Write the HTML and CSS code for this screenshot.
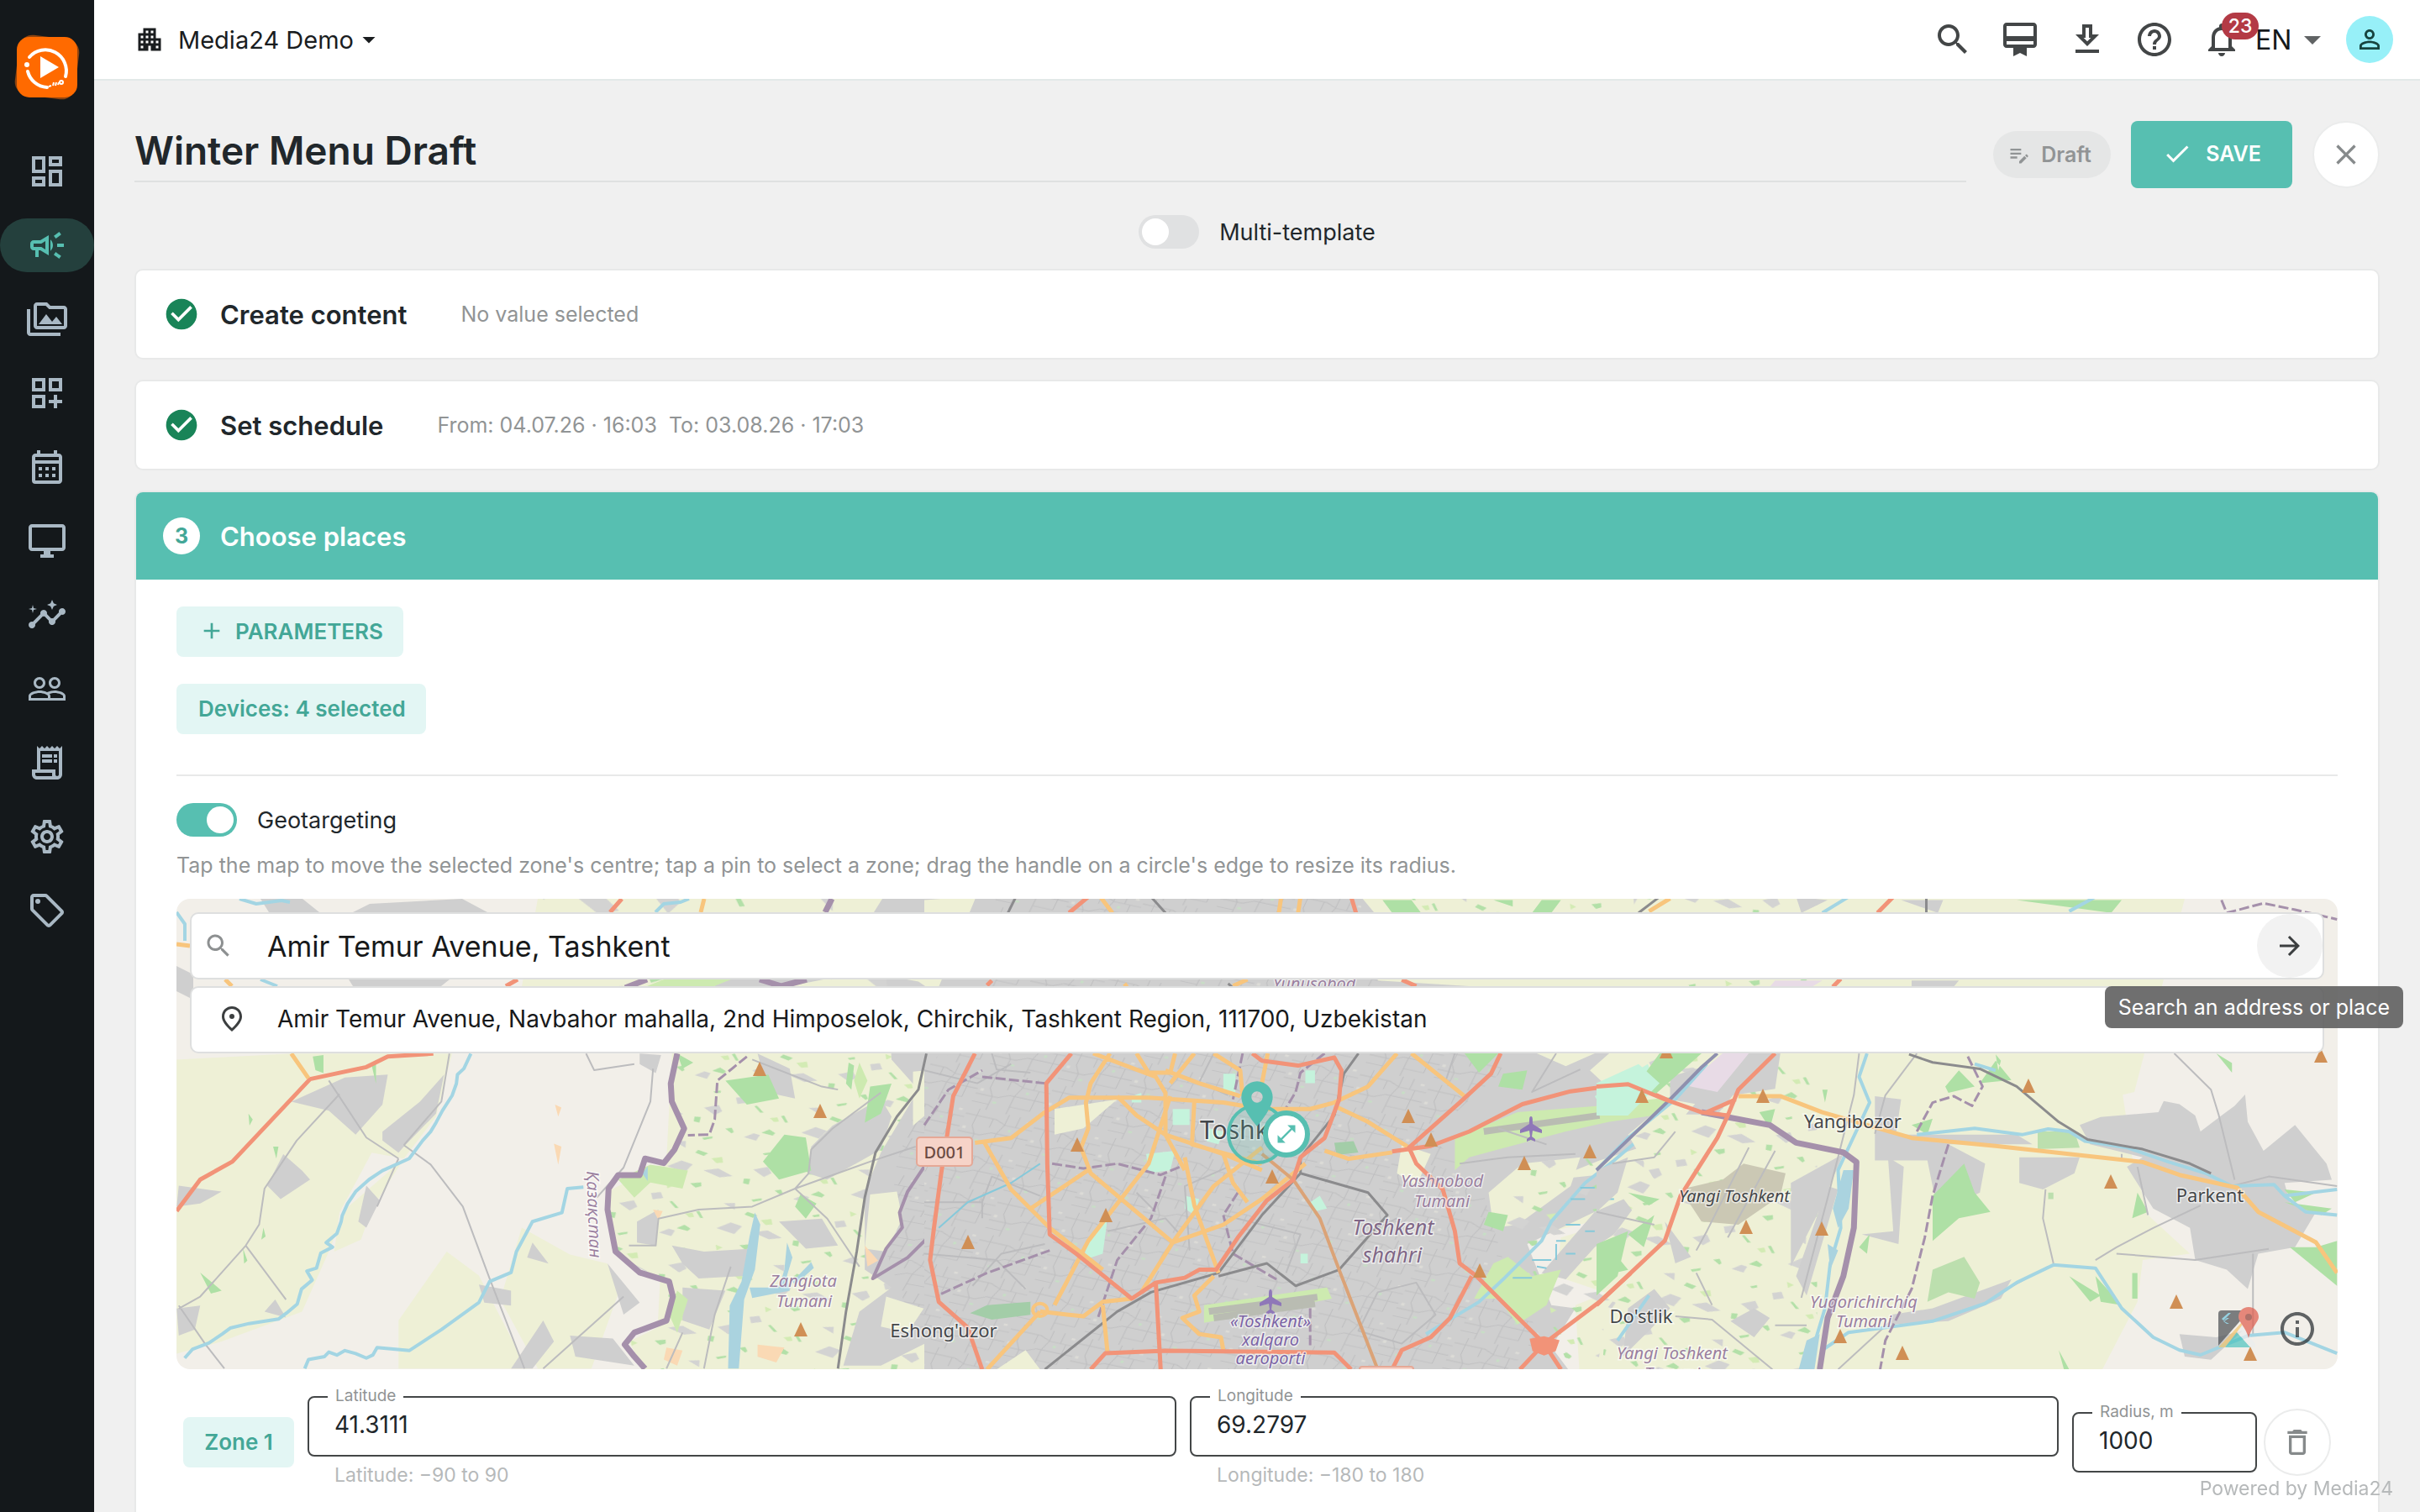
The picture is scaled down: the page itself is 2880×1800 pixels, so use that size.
FILE: index.html
```html
<!DOCTYPE html>
<html lang="en">
<head>
<meta charset="utf-8">
<title>Winter Menu Draft – Media24</title>
<meta name="viewport" content="width=device-width, initial-scale=1">
<link rel="stylesheet" href="styles.css">
</head>
<body>
<svg class="sprite" aria-hidden="true">
  <symbol id="i-dashboard" viewBox="0 0 24 24"><path d="M19 5v2h-4V5h4M9 5v6H5V5h4m10 8v6h-4v-6h4M9 17v2H5v-2h4M21 3h-8v6h8V3zM11 3H3v10h8V3zm10 8h-8v10h8V11zm-10 4H3v6h8v-6z"/></symbol>
  <symbol id="i-campaign" viewBox="0 0 24 24"><path d="M18 11v2h4v-2h-4zm-2 6.61c.96.71 2.21 1.65 3.2 2.39.4-.53.8-1.07 1.2-1.6-.99-.74-2.24-1.68-3.2-2.4-.4.54-.8 1.08-1.2 1.61zM20.4 5.6c-.4-.53-.8-1.07-1.2-1.6-.99.74-2.24 1.68-3.2 2.4.4.53.8 1.07 1.2 1.6.96-.72 2.21-1.65 3.2-2.4zM4 9c-1.1 0-2 .9-2 2v2c0 1.1.9 2 2 2h1v4h2v-4h1l5 3V6L8 9H4zm5.03 1.71L11 9.53v4.94l-1.97-1.18-.48-.29H4v-2h4.55l.48-.29zM15.5 12c0-1.33-.58-2.53-1.5-3.35v6.69c.92-.81 1.5-2.01 1.5-3.34z"/></symbol>
  <symbol id="i-media" viewBox="0 0 24 24"><path d="M2 6H0v5h.01L0 20c0 1.100.9 2 2 2h18v-2H2V6zm5 9h14l-3.500-4.500-2.500 3.010L11.500 9zM22 4h-8l-2-2H6c-1.100 0-1.990.9-1.990 2L4 16c0 1.100.9 2 2 2h16c1.100 0 2-.9 2-2V6c0-1.100-.9-2-2-2zm0 12H6V4h5.170l1.410 1.410.59.59H22v10z"/></symbol>
  <symbol id="i-widgets" viewBox="0 0 24 24"><path d="M3 11h8V3H3v8zm2-6h4v4H5V5zm8-2v8h8V3h-8zm6 6h-4V5h4v4zM3 21h8v-8H3v8zm2-6h4v4H5v-4zm13-2h-2v3h-3v2h3v3h2v-3h3v-2h-3z"/></symbol>
  <symbol id="i-calendar" viewBox="0 0 24 24"><path d="M19 4h-1V2h-2v2H8V2H6v2H5c-1.110 0-1.990.9-1.990 2L3 20a2 2 0 0 0 2 2h14c1.100 0 2-.9 2-2V6c0-1.100-.9-2-2-2zm0 16H5V10h14v10zm0-12H5V6h14v2zM9 14H7v-2h2v2zm4 0h-2v-2h2v2zm4 0h-2v-2h2v2zm-8 4H7v-2h2v2zm4 0h-2v-2h2v2zm4 0h-2v-2h2v2z"/></symbol>
  <symbol id="i-screen" viewBox="0 0 24 24"><path d="M21 2H3c-1.100 0-2 .9-2 2v12c0 1.100.9 2 2 2h7v2H8v2h8v-2h-2v-2h7c1.100 0 2-.9 2-2V4c0-1.100-.9-2-2-2zm0 14H3V4h18v12z"/></symbol>
  <symbol id="i-insights" viewBox="0 0 24 24"><path d="M21 8c-1.450 0-2.260 1.440-1.930 2.510l-3.550 3.560c-.3-.09-.74-.09-1.040 0l-2.550-2.550C12.270 10.450 11.460 9 10 9c-1.450 0-2.270 1.440-1.930 2.520l-4.560 4.550C2.440 15.740 1 16.550 1 18c0 1.100.9 2 2 2 1.450 0 2.260-1.440 1.930-2.510l4.550-4.560c.3.09.74.09 1.040 0l2.550 2.550C12.730 16.550 13.540 18 15 18c1.450 0 2.270-1.440 1.930-2.520l3.560-3.550C21.560 12.260 23 11.450 23 10c0-1.100-.9-2-2-2zM15 9l.94-2.070L18 6l-2.060-.93L15 3l-.92 2.070L12 6l2.080.93zM3.500 11L4 9l2-.5L4 8l-.5-2L3 8l-2 .5L3 9z"/></symbol>
  <symbol id="i-people" viewBox="0 0 24 24"><path d="M16.500 13c-1.200 0-3.070.34-4.500 1-1.430-.67-3.300-1-4.500-1C5.330 13 1 14.080 1 16.250V19h22v-2.750c0-2.170-4.330-3.250-6.500-3.250zm-4 4.500h-10v-1.250c0-.54 2.560-1.750 5-1.750s5 1.210 5 1.750v1.250zm9 0H14v-1.250c0-.46-.2-.86-.52-1.220.88-.3 1.960-.53 3.020-.53 2.440 0 5 1.210 5 1.750v1.250zM7.500 12c1.930 0 3.500-1.570 3.500-3.500S9.430 5 7.500 5 4 6.570 4 8.500 5.570 12 7.500 12zm0-5.500c1.100 0 2 .9 2 2s-.9 2-2 2-2-.9-2-2 .9-2 2-2zm9 5.500c1.930 0 3.500-1.570 3.500-3.500S18.430 5 16.500 5 13 6.570 13 8.500s1.570 3.500 3.500 3.500zm0-5.500c1.100 0 2 .9 2 2s-.9 2-2 2-2-.9-2-2 .9-2 2-2z"/></symbol>
  <symbol id="i-receipt" viewBox="0 0 24 24"><path d="M19.500 3.500L18 2l-1.500 1.500L15 2l-1.500 1.500L12 2l-1.500 1.500L9 2 7.500 3.500 6 2v14H3v3c0 1.660 1.340 3 3 3h12c1.660 0 3-1.340 3-3V2l-1.500 1.500zM15 20H6c-.55 0-1-.45-1-1v-1h10v2zm4-1c0 .55-.45 1-1 1s-1-.45-1-1v-3H8V5h11v14z"/><path d="M9 7h6v2H9zM16 7h2v2h-2zM9 10h6v2H9zM16 10h2v2h-2z"/></symbol>
  <symbol id="i-settings" viewBox="0 0 24 24"><path d="M19.430 12.980c.04-.32.07-.64.07-.98 0-.34-.03-.66-.07-.98l2.110-1.650c.19-.15.24-.42.12-.64l-2-3.460c-.09-.16-.26-.25-.44-.25-.06 0-.12.01-.17.03l-2.490 1c-.52-.4-1.080-.73-1.690-.98l-.38-2.650C14.460 2.180 14.250 2 14 2h-4c-.25 0-.46.18-.49.42l-.38 2.650c-.61.25-1.170.59-1.690.98l-2.490-1c-.06-.02-.12-.03-.18-.03-.17 0-.34.09-.43.25l-2 3.460c-.13.22-.07.49.12.64l2.110 1.650c-.04.32-.07.65-.07.98 0 .33.03.66.07.98l-2.110 1.650c-.19.15-.24.42-.12.64l2 3.460c.09.16.26.25.44.25.06 0 .12-.01.17-.03l2.490-1c.52.4 1.080.73 1.690.98l.38 2.650c.03.24.24.42.49.42h4c.25 0 .46-.18.49-.42l.38-2.650c.61-.25 1.170-.59 1.690-.98l2.490 1c.06.02.12.03.18.03.17 0 .34-.09.43-.25l2-3.460c.12-.22.07-.49-.12-.64l-2.110-1.650zm-1.980-1.710c.04.31.05.52.05.73 0 .21-.02.43-.05.73l-.14 1.130.89.7 1.080.84-.7 1.210-1.270-.51-1.040-.42-.9.68c-.43.32-.84.56-1.250.73l-1.060.43-.16 1.130-.2 1.350h-1.400l-.19-1.350-.16-1.130-1.060-.43c-.43-.18-.83-.41-1.230-.71l-.91-.7-1.060.43-1.270.51-.7-1.210 1.080-.84.89-.7-.14-1.130c-.03-.31-.05-.54-.05-.74s.02-.43.05-.73l.14-1.130-.89-.7-1.080-.84.7-1.210 1.270.51 1.040.42.9-.68c.43-.32.84-.56 1.250-.73l1.060-.43.16-1.130.2-1.350h1.390l.19 1.350.16 1.130 1.060.43c.43.18.83.41 1.230.71l.91.7 1.060-.43 1.270-.51.7 1.210-1.070.85-.89.7.14 1.130zM12 8c-2.210 0-4 1.790-4 4s1.790 4 4 4 4-1.790 4-4-1.790-4-4-4zm0 6c-1.100 0-2-.9-2-2s.9-2 2-2 2 .9 2 2-.9 2-2 2z"/></symbol>
  <symbol id="i-tag" viewBox="0 0 24 24"><path d="M21.410 11.580l-9-9C12.050 2.220 11.550 2 11 2H4c-1.100 0-2 .9-2 2v7c0 .55.22 1.050.59 1.420l9 9c.36.36.86.58 1.410.58s1.050-.22 1.410-.59l7-7c.37-.36.59-.86.59-1.410s-.23-1.060-.59-1.420zM13 20.010L4 11V4h7v-.01l9 9-7 7.020z"/><circle cx="6.500" cy="6.500" r="1.500"/></symbol>
  <symbol id="i-apartment" viewBox="0 0 24 24"><path d="M17 11V3H7v4H3v14h8v-4h2v4h8V11h-4zM7 19H5v-2h2v2zm0-4H5v-2h2v2zm0-4H5V9h2v2zm4 4H9v-2h2v2zm0-4H9V9h2v2zm0-4H9V5h2v2zm4 8h-2v-2h2v2zm0-4h-2V9h2v2zm0-4h-2V5h2v2zm4 12h-2v-2h2v2zm0-4h-2v-2h2v2z"/></symbol>
  <symbol id="i-drop" viewBox="0 0 24 24"><path d="M7 10l5 5 5-5z"/></symbol>
  <symbol id="i-search" viewBox="0 0 24 24"><path d="M15.500 14h-.79l-.28-.27C15.410 12.590 16 11.110 16 9.500 16 5.910 13.090 3 9.500 3S3 5.910 3 9.500 5.910 16 9.500 16c1.610 0 3.090-.59 4.230-1.570l.27.28v.79l5 4.990L20.490 19l-4.990-5zm-6 0C7.010 14 5 11.990 5 9.500S7.010 5 9.500 5 14 7.010 14 9.500 11.990 14 9.500 14z"/></symbol>
  <symbol id="i-board" viewBox="0 0 24 24"><path d="M20 2H4c-1.110 0-2 .89-2 2v11c0 1.110.89 2 2 2h4v5l4-2 4 2v-5h4c1.110 0 2-.89 2-2V4c0-1.110-.89-2-2-2zm0 13H4v-2h16v2zm0-5H4V4h16v6z"/></symbol>
  <symbol id="i-download" viewBox="0 0 24 24"><path d="M19 9h-4V3H9v6H5l7 7 7-7zm-8 2V5h2v6h1.170L12 13.170 9.830 11H11zm-6 7h14v2H5z"/></symbol>
  <symbol id="i-help" viewBox="0 0 24 24"><path d="M11 18h2v-2h-2v2zm1-16C6.480 2 2 6.480 2 12s4.480 10 10 10 10-4.480 10-10S17.520 2 12 2zm0 18c-4.410 0-8-3.590-8-8s3.590-8 8-8 8 3.590 8 8-3.590 8-8 8zm0-14c-2.210 0-4 1.790-4 4h2c0-1.100.9-2 2-2s2 .9 2 2c0 2-3 1.750-3 5h2c0-2.250 3-2.500 3-5 0-2.210-1.790-4-4-4z"/></symbol>
  <symbol id="i-bell" viewBox="0 0 24 24"><path d="M12 22c1.100 0 2-.9 2-2h-4c0 1.100.9 2 2 2zm6-6v-5c0-3.070-1.630-5.640-4.500-6.320V4c0-.83-.67-1.500-1.500-1.500s-1.500.67-1.500 1.500v.68C7.640 5.360 6 7.920 6 11v5l-2 2v1h16v-1l-2-2zm-2 1H8v-6c0-2.480 1.510-4.500 4-4.500s4 2.020 4 4.500v6z"/></symbol>
  <symbol id="i-person" viewBox="0 0 24 24"><path d="M12 5.900c1.160 0 2.100.94 2.100 2.100s-.94 2.100-2.100 2.100S9.900 9.160 9.900 8s.94-2.100 2.100-2.100m0 9c2.970 0 6.100 1.460 6.100 2.100v1.100H5.900V17c0-.64 3.130-2.100 6.100-2.100M12 4C9.790 4 8 5.790 8 8s1.790 4 4 4 4-1.790 4-4-1.790-4-4-4zm0 9c-2.670 0-8 1.340-8 4v3h16v-3c0-2.660-5.330-4-8-4z"/></symbol>
  <symbol id="i-note" viewBox="0 0 24 24"><path d="M3 10h11v2H3v-2zm0-2h11V6H3v2zm0 8h7v-2H3v2zm15.010-3.130.71-.71c.39-.39 1.020-.39 1.410 0l.71.71c.39.39.39 1.020 0 1.410l-.71.71-2.120-2.120zm-.71.71-5.300 5.300V21h2.120l5.300-5.300-2.120-2.120z"/></symbol>
  <symbol id="i-check" viewBox="0 0 24 24"><path d="M9 16.170L4.830 12l-1.420 1.410L9 19 21 7l-1.410-1.410z"/></symbol>
  <symbol id="i-close" viewBox="0 0 24 24"><path d="M19 6.410L17.590 5 12 10.590 6.410 5 5 6.410 10.590 12 5 17.590 6.410 19 12 13.410 17.590 19 19 17.590 13.410 12z"/></symbol>
  <symbol id="i-done" viewBox="0 0 24 24"><path d="M12 2C6.480 2 2 6.480 2 12s4.480 10 10 10 10-4.480 10-10S17.520 2 12 2zm-2 15l-5-5 1.410-1.410L10 14.170l7.590-7.590L19 8l-9 9z"/></symbol>
  <symbol id="i-add" viewBox="0 0 24 24"><path d="M19 13h-6v6h-2v-6H5v-2h6V5h2v6h6v2z"/></symbol>
  <symbol id="i-arrow" viewBox="0 0 24 24"><path d="M12 4l-1.410 1.410L16.170 11H4v2h12.170l-5.580 5.590L12 20l8-8z"/></symbol>
  <symbol id="i-pin" viewBox="0 0 24 24"><path d="M12 2c-4.200 0-8 3.220-8 8.200 0 3.320 2.670 7.250 8 11.800 5.330-4.550 8-8.480 8-11.800C20 5.220 16.200 2 12 2zm0 17.340c-4.050-3.700-6-6.790-6-9.140C6 6.430 8.820 4 12 4s6 2.430 6 6.200c0 2.340-1.950 5.440-6 9.140z"/><circle cx="12" cy="10" r="2"/></symbol>
  <symbol id="i-place" viewBox="0 0 24 24"><path d="M12 2C8.130 2 5 5.130 5 9c0 5.250 7 13 7 13s7-7.750 7-13c0-3.870-3.130-7-7-7zm0 9.500c-1.380 0-2.500-1.120-2.500-2.500s1.120-2.500 2.500-2.500 2.500 1.120 2.500 2.500-1.120 2.500-2.500 2.500z"/></symbol>
  <symbol id="i-resize" viewBox="0 0 24 24"><path d="M21 11V3h-8l3.290 3.290-10 10L3 13v8h8l-3.290-3.290 10-10z"/></symbol>
  <symbol id="i-info" viewBox="0 0 24 24"><path d="M11 7h2v2h-2zm0 4h2v6h-2zm1-9C6.480 2 2 6.480 2 12s4.480 10 10 10 10-4.480 10-10S17.520 2 12 2zm0 18c-4.410 0-8-3.590-8-8s3.590-8 8-8 8 3.590 8 8-3.590 8-8 8z"/></symbol>
  <symbol id="i-trash" viewBox="0 0 24 24"><path d="M6 19c0 1.100.9 2 2 2h8c1.100 0 2-.9 2-2V7H6v12zM8 9h8v10H8V9zm7.500-5l-1-1h-5l-1 1H5v2h14V4z"/></symbol>
</svg>

<div class="app">
  <aside class="sidebar">
    <a class="logo" href="#" aria-label="Media24 home">
      <svg viewBox="0 0 80 80" aria-hidden="true">
        <rect x="4" y="4" width="72" height="72" rx="16" fill="#8f440f" transform="rotate(7 40 40)"/>
        <rect x="4" y="4" width="72" height="72" rx="15" fill="#ff6a00"/>
        <g fill="none" stroke="#fff" stroke-width="4" stroke-linecap="round">
          <path d="M19 28A25 25 0 0 1 62 51"/>
          <path d="M17 45A25 25 0 0 0 40 64"/>
        </g>
        <circle cx="16" cy="37" r="3" fill="#fff"/>
        <path d="M32 27v26l22-13z" fill="#fff"/>
        <path d="M42 63l3-1m2 0l1-4m2 4l1-4m2 3l1-3" stroke="#fff" stroke-width="2" fill="none"/>
        <circle cx="57" cy="58" r="2" stroke="#fff" stroke-width="2" fill="none"/>
      </svg>
    </a>
    <nav class="nav" aria-label="Main">
      <a href="#" aria-label="Dashboard"><svg class="ic48"><use href="#i-dashboard"/></svg></a>
      <a href="#" class="active" aria-label="Campaigns" aria-current="page"><svg class="ic48"><use href="#i-campaign"/></svg></a>
      <a href="#" aria-label="Media"><svg class="ic48"><use href="#i-media"/></svg></a>
      <a href="#" aria-label="Widgets"><svg class="ic48"><use href="#i-widgets"/></svg></a>
      <a href="#" aria-label="Calendar"><svg class="ic48"><use href="#i-calendar"/></svg></a>
      <a href="#" aria-label="Devices"><svg class="ic48"><use href="#i-screen"/></svg></a>
      <a href="#" aria-label="Insights"><svg class="ic48"><use href="#i-insights"/></svg></a>
      <a href="#" aria-label="Users"><svg class="ic48"><use href="#i-people"/></svg></a>
      <a href="#" aria-label="Billing"><svg class="ic48"><use href="#i-receipt"/></svg></a>
      <a href="#" aria-label="Settings"><svg class="ic48"><use href="#i-settings"/></svg></a>
      <a href="#" aria-label="Tags"><svg class="ic48"><use href="#i-tag"/></svg></a>
    </nav>
  </aside>

  <div class="page">
    <header class="topbar">
      <button class="company" type="button" aria-haspopup="menu">
        <svg class="ic36"><use href="#i-apartment"/></svg>
        <span>Media24 Demo</span>
        <svg class="ic36 caret"><use href="#i-drop"/></svg>
      </button>
      <div class="tools">
        <button type="button" aria-label="Search"><svg class="ic48"><use href="#i-search"/></svg></button>
        <button type="button" aria-label="Plans"><svg class="ic48"><use href="#i-board"/></svg></button>
        <button type="button" aria-label="Downloads"><svg class="ic48"><use href="#i-download"/></svg></button>
        <button type="button" aria-label="Help"><svg class="ic48"><use href="#i-help"/></svg></button>
        <button type="button" class="bell" aria-label="Notifications"><svg class="ic48"><use href="#i-bell"/></svg><span class="badge">23</span></button>
      </div>
      <div class="lang">
        <select aria-label="Language"><option>EN</option></select>
        <svg class="ic48"><use href="#i-drop"/></svg>
      </div>
      <button class="avatar" type="button" aria-label="Account"><svg class="ic36"><use href="#i-person"/></svg></button>
    </header>

    <main class="content">
      <div class="title-row">
        <input class="title" type="text" aria-label="Campaign name" value="Winter Menu Draft">
        <span class="status"><svg class="ic28"><use href="#i-note"/></svg>Draft</span>
        <button class="save" type="button"><svg class="ic36"><use href="#i-check"/></svg>SAVE</button>
        <button class="round close" type="button" aria-label="Close"><svg class="ic40"><use href="#i-close"/></svg></button>
      </div>

      <label class="switch centered"><input type="checkbox"><span>Multi-template</span></label>

      <div class="steps">
        <section class="card">
          <div class="step-head">
            <svg class="ic44 done"><use href="#i-done"/></svg>
            <h2>Create content</h2>
            <p>No value selected</p>
          </div>
        </section>
        <section class="card">
          <div class="step-head">
            <svg class="ic44 done"><use href="#i-done"/></svg>
            <h2>Set schedule</h2>
            <p>From: 04.07.26 · 16:03&nbsp; To: 03.08.26 · 17:03</p>
          </div>
        </section>
        <section class="card">
          <div class="step-head current">
            <span class="number">3</span>
            <h2>Choose places</h2>
          </div>
          <div class="step-body">
            <button class="soft params" type="button"><svg class="ic32"><use href="#i-add"/></svg>PARAMETERS</button>
            <button class="soft devices" type="button">Devices: 4 selected</button>
            <hr>
            <label class="switch"><input type="checkbox" checked><span>Geotargeting</span></label>
            <p class="hint">Tap the map to move the selected zone's centre; tap a pin to select a zone; drag the handle on a circle's edge to resize its radius.</p>

            <div class="map">
              <svg class="tiles" viewBox="210 1070 2572 560" preserveAspectRatio="xMidYMid slice" role="img" aria-label="Map of Tashkent">
                <defs>
                  <pattern id="streets" width="148" height="122" patternUnits="userSpaceOnUse" patternTransform="rotate(18)">
                    <path d="M0 22H66L90 34H148M0 78H48L70 64H148M24 0V54L36 78V122M88 0V34L80 64V122M124 34V98H80M0 104H36M112 0V34M60 22V50" fill="none" stroke="#b4b4b6" stroke-width="2"/>
                    <path d="M42 92h8v6h-8zM100 44h6v8h-6z" fill="#c2e8bf"/><path d="M6 60h7v8h-7zM130 10h8v6h-8z" fill="#e6e5dd"/>
                  </pattern>
                  <pattern id="fields" width="274" height="226" patternUnits="userSpaceOnUse" patternTransform="rotate(-24)">
                    <path d="M10 10l12 2-2 14-6 3zM66 50l18-4 5 16-8 5zM40 114l14 2-3 7-10-2zM122 14l6 1-3 24-5-2zM200 60l9-6 12 18-11 5zM150 150l20 5-5 12-12 0zM240 190l8-14 10 6-10 16zM90 190l5 0 2 26-6-2zM232 20l20 4-4 6-16-2z" fill="#b3e0a8"/>
                    <path d="M30 50l22-4 8 10-14 14zM134 80l32-6 14 20-24 18zM2 156l29 3-3 22-18 6zM190 120l28 6 14 34-24-6zM180 10l20 8-10 20zM70 150l18 4-4 20-20-4z" fill="#d3d3d2"/>
                    <path d="M100 12l14 3-3 14-9-2zM220 90l20 4-6 18-12-4zM110 130l8 14-14 4z" fill="#d3ebb4"/>
                  </pattern>
                  <path id="peak" d="M0-9L8 8H-8z" fill="#d08f55"/>
                  <path id="plane" d="M0-14c2 0 2 3 2 9l11 7v4L2 3l-1 7 4 3v3l-5-2-5 2v-3l4-3-1-7-11 3V2l11-7c0-6 0-9 2-9z" fill="#8f78b8"/>
                </defs>
                <rect x="210" y="1070" width="2572" height="560" fill="#f2efe9"/>

                <g class="land">
                  <path class="farm" d="M640 1070H2600L2540 1300 1160 1630H780L800 1250 620 1180z"/>
                  <path class="fields" d="M640 1070H1200V1260H800L720 1150z"/>
                  <path class="town" d="M310 1070l50 0 20 16-60 0zM440 1076l110-6 30 16H420zM1050 1070h90l-20 16h-80zM415 1166h120l-10 8H420zM210 1150l20 10v30l-20-10zM860 1166h120l-40 8h-90z"/>
                  <path class="river" d="M285 1070l20 6 30-4 10 2M210 1086l10 14 0 20M780 1086l10-10 20-2 10-4M310 1166l20 8"/>
                  <path class="red" d="M740 1070l-14 16M616 1166l-14 8"/>
                  <path class="orange" d="M838 1070l-4 16M210 1124l16 2M268 1166l8 8"/>
                  <path class="border" d="M990 1070l-8 16M770 1166l-26 10M904 1166l26 8 30-8"/>
                  <path class="orchard" d="M790 1166h80l-20 8h-80z"/>
                </g>

                <g class="land" transform="translate(200 1240) scale(.6378 .3571)">
                  <path class="farm" d="M16 60L230 40H530L500 250 440 390 330 560 300 700 250 900 100 1000 16 1040zM380 560l60-170-60-20-60 200-10 130 50-40zM520 700l60 80 90 310H430V930zM660 620l90 90 70 30 20 100-50 250H690L620 860zM960 30H1460V1100H890L860 1000 940 930 930 800 840 720 820 500 930 400 965 300 940 140z"/>
                  <path class="fields" d="M960 30H1460V1100H890L860 1000 940 930 930 800 840 720 820 500 930 400 965 300 940 140z"/>
                  <path class="town" d="M230 200L330 120l80-10-10 100-50 100-50-80zM400 300l70-100 45-90-15 130-60 110-10 20-30-40zM185 480l30-105 35 55 15 30-55 65zM355 600l15-120 25 50-25 90zM580 810l60 20v50l-50-10zM875 600l40-40-5 120-35-10zM940 680l60 20 90-10v90l-100 10-30-50zM960 820l80 10-30 130-50-30zM1240 280l90-90 20 60-20 110-100 100-35-20 5-90zM200 860l20 60-40-20zM640 1090l60-160 20 70-40 90zM750 980l80 10 40 90-110-30zM820 740l60 130-30 40zM680 670l30 70-40-20zM20 480l80 20-40 40-44 10zM16 890l44-10-10 80-30 20zM1100 40l60 50 10 100-50-20zM880 40l40 5-10 60-30-30zM1140 600l80-10 30 90-60 10z"/>
                  <path class="town" d="M1340 -220L1400 -200 1600 40V1100H1520L1420 1000 1330 1080H1260L1290 900 1350 820 1300 760V500L1330 370 1400 160 1350 60z"/>
                  <path class="streets" d="M1400 200L1600 40V1100H1520L1420 1000 1380 900 1340 700 1360 400z"/>
                  <path class="farm" d="M1310 510l50-10 10 90-30 110-40-10zM1390 100l60-10-20 130-40 60zM1340 850l70 40-30 80-50-20z"/>
                  <path class="green" d="M1040 130l80-20 20 80-60 20zM1150 310l40 10 10 110-60 30-30-60zM1310 150l40-10-20 100-30 30zM1180 510l30 30-20 50-20-40zM60 770l40 60-20 10zM270 50l20-5v60l-15-10zM950 40l30 30-20 20zM1270 70l10 10-5 80-10-20zM380 80l8-20v80zM150 240l8 20-6 20zM140 690l8 40-6 10zM196 350l10 0-4 40zM178 620l4 30-8 10z"/>
                  <path d="M1500 900l70-30v60l-60 10z" fill="#a3cda8"/>
                  <path class="orchard" d="M840 460l60-50 70 20-10 60-60-20-30 50zM950 830l20 30-20 110-15-60zM1280 130l10-60 15 60-15 60z"/>
                  <path d="M1100 1010l50 10-15 50-35-20zM1300 680l25 50-20 20zM930 1020l30 10-10 50-25-20zM905 560l18 5-8 30zM720 340l14 10-6 60zM722 210l12 10-6 30z" fill="#fad9b4"/>
                  <path class="lake" d="M1095 570l10 40-10 150-20 100-10 230h-20l3-210 22-80 15-150zM1155 670l10 50-10 60 5 50-70 25-5-35 55 0 10-60zM1200 735l5 20-35 55-5-10zM885 440l10-25v50z"/>
                  <path class="road" d="M300 130l70 190 60 70M440 345l50 65 60 140 50 240 65 300M320 175l-80 155-60 160-10 120-25 70-85 170-40 40M20 880l50 130 35 80M145 680l75 180M525 40l-15 160-70 145M430 390l-40 160M905 90l-5 110-50 220-50 100M850 850L700 1090M780 40l15 55 75-20M1395 350l-85 50-140 90-80 60-100 10-75 30-5 90h-50M1170 490l60 100 60 160M1090 60l130 90 30 10M1330 170l-90 120-40 70-5 80-25 50M1050 750l-30 160-20 180M930 1090l30-120"/>
                  <path class="river" d="M565 40l-13 50-12 20-2 30-8 40-18 50-12 40-10 30-15 30-25 60-50 40-25 30-25 40-15 40-10 40-2 20-8 40-20 30 12 15-22 20-8 50-18 10 10 30-20 30-8 50-20 30-15 20-55 15-35 15-15 20-25 30-30 20-15 30M255 1090l7-30 30-10 8-15 15 10 15-15 20 10 20 15 12-10 8-25 60 10 60-70 70-90 20-70 40-30 10-70 30-100 55-30 10-80 30-5"/>
                  <path class="red" d="M16 565l44-105 60-60 145-275 105-40 40-35 85-10"/>
                  <path class="orange" d="M230 40l32 82M1568 315l-43 20-25 0M1522 340l46 140M1568 1000l-43 90"/>
                  <path class="border" d="M950 40l-12 100 2 60 23 90-18 70-20 45-35-15-10 55h-40l-18 45-2 70 15 140 45 70 55 30 7 50-12 80-60 40-18 40 18 40 20 40"/>
                  <path class="border thin" d="M1568 125l-58-5-40 10-20 90-25 60-15 140-30 80-15 70 5 50-30 70-25 100 65-70 45-80M1568 740l-60 50-60 60"/>
                  <path class="border dashed" d="M1080 50l-55 80-5 130-10 50-40 2"/>
                  <path class="rail" d="M1415 40l-15 120-40 90-40 120-20 150-15 180-20 200-15 190"/>
                  <path class="red" d="M1505 40l-25 110-30 180-10 170-15 180 5 150 60 100 30 160"/>
                </g>

                <g class="land" transform="translate(1100 1060) scale(.574 .3827)">
                  <path class="town" d="M110 10H900L950 100 940 280 1150 300 1200 507H1420L1380 560 1480 700 1568 700V760L1400 840 1300 900 1430 880 1390 1000 1250 1100 1300 1290 1350 1300 1300 1420 1340 1500H0V560L60 500 30 300z"/>
                  <path class="streets" d="M150 10H900L940 280 1150 400 1200 560 1050 760 1160 950 1200 1150 1280 1400 1200 1500H0V560L100 400z"/>
                  <path class="farm" d="M270 680l130-30-70 90-60 20zM1170 940l70-90 120-20-20 90-110 120-50 10zM1430 900l138-40v200l-128-60zM1320 1080l130-60 90 80-110 160-120-60zM1350 1290l150-90 68 30v260h-210zM990 790l60 30-30 100-40-40zM150 1490l60-60 30 60zM1270 507h120l-60 40zM1390 860l50-10-40 60zM0 30l90-10-30 50H0z"/>
                  <path class="fields" d="M1170 940l70-90 330-60v700h-230zM950 20h618v60H960z"/>
                  <path class="town" d="M1390 1000l60-40 30 60-90 90-60 100-50-20z"/>
                  <path d="M130 1290l90-10v40l-80 15-45-20zM850 785l40-5 10 35-45 8z" fill="#a3cda8"/>
                  <path class="green" d="M1200 570l50-10-10 60-50-10zM1170 1000l40 10-10 50-40-20zM1440 1090l70-20-20 100-60 20zM1500 930l50 30-10 20-40-30zM1480 1300l50-60-20 80zM1120 507h70l-40 60zM1340 430h80l-30 40zM950 30h60l20 40h-60zM1280 30h40l-20 40h-40zM1180 30h40v20z"/>
                  <path class="park" d="M515 680h35v50h-35zM460 820l60-10-10 60-45 10zM540 950l30 10-10 50-20-20zM620 570h25v60h-25zM800 970l20-20 15 40-30 10zM1390 640l110-100 20 80-110 70zM340 1080l40-60-10 110-40 20zM780 1130h15v30h-15zM590 740l30 10-10 40-25-10zM790 560h20v40h-20zM430 640l20-10v30h-20z"/>
                  <path class="orchard" d="M1100 770l130-80 170-20 160-30v50l-140 30-90 30-200 80-30 40zM580 1290l255-55 10 35-265 75zM1180 1160l30-20 50 60 60-20-30 110-60 60-40-80-50 0z"/>
                  <path d="M1160 750l240-50M590 1310l225-45M600 1330l210-45" fill="none" stroke="#b9bcb2" stroke-width="8"/>
                  <path class="road" d="M0 560l110 40 70-60M140 507l10 50 70 10M0 970h120l20-80 100 60M120 1020v-60M0 1130l150 20 60 90M550 1120l-10-200 90-60M600 507l-30 90 60 40M620 1010l160 60-30 120M940 1250l80-30 40 100-70 90-90-40zM900 1080l80-60M1100 507l-20 90M1190 740l100 50M100 1230l60-100 90-30M380 1060l120-40 30 50M440 940l40 60M1310 507l-50 120 100-70M1110 850l100-20 140-10"/>
                  <path class="river" d="M1568 665l-138 175-60 70-70 120-20 60-80 120-50 70-110 100" stroke-width="9"/>
                  <path class="river thin" d="M240 850l-60 60-90 60-60 80"/>
                  <path class="ditch" d="M1360 925l30 0M1340 960h30M1410 960h20M1330 1040h30M1370 1060h20M1310 1090h20M1260 1150h40M1220 1205h40M1330 1130h20M1270 1170l20 5M1310 1100v50"/>
                  <path class="border dashed" d="M120 580l130 20M0 730l50-110 70-60M265 850l65 15 70-15 90 35 40-25M500 890l-30 130-70 130-40 180M35 1255l95-65 130-70M660 507l-20 143M650 940l-30 70 20 120 90 80M830 507l-50 60-10 60-20 50M800 1300v120"/>
                  <path class="rail" d="M900 507l-30 63-20 130-70 130v50l-80 130-90 180-140 60-70 60-150 180M780 880l140 60 40 70-100 170-90 50-60-70-100 40M470 20l30 50M190 20l-20 60M630 290l30 40"/>
                  <path class="orange" d="M465 645H300l-50 45-70 80-75 15M125 785l55 145 80 120 110 130M340 870l-120 120M385 507l-40 93-10 60 5 80-15 60 20 80 170 215M350 507l130 73 20 50v130M400 640l40 60 60 60 120 60 80 50M500 560l70 40 85 40M465 645l155 15 80 20h100l50-20 70-50 60-103M560 507l-50 93M560 650l-5 140 145 60M510 640l-45 210-125 240-70 200M540 830l20 150 50 210M515 1095l85-175 100-120M515 1095l105-55 80-80 90-110M500 760l40 110M515 1095l-65 155M240 1310l90 15 40-45 60-10M240 1310l-110 180M370 1290l10 150M600 1200l-40 60 10 50-35 20 35 50 45 10 5 40M830 810l50 25 90-20M850 670l70 50 85 80M1010 507l110 133M700 600l12-93M600 507l55 53 5 80M620 820l20 90 30 60M440 507l25 60 45 0 10-60M365 20l25 50M740 20l-5 50M780 20l-5 50M415 290l5 10M1480 70l60-50M640 297l30-20"/>
                  <path class="orange brown" d="M700 820l65 80 55 120 40 160 80 310"/>
                  <path d="M225 1305a15 20 0 1 0 30 0 15 20 0 1 0-30 0" fill="none" stroke="#f8c57d" stroke-width="4"/>
                  <path class="red" d="M305 507l-52 93 2 250 5 220 55 60 115 140 50-50 60-15 30-25h35l45-100 60-115 55-65 15-70 50-60 30-120 5-90-15-40-75 25-75-15-20-23M345 1490l30-50 125-8 350 6 35 52M1195 507l-20 63-65 90-105 140 15 50 55 80 25 130 10 100 35 40 140 210 35 80M1285 1410l-50 80M1285 1410l115-130 130-180 38-120M970 812l80-17 80-45 110-85 100-40 110-22 50 22 68 45M1135 1200l-45 130-40 60-60 40-20 60M480 1220l10 270M105 507L60 640 35 880 20 1050l-8 100 18 130 60 80 30 130M340 20l-40 50M885 20l10 50M140 280l-10 15M990 278l30 20"/>
                  <path d="M1255 1395l30-8 32 12-8 34-24 14-24-14z" fill="#f29378"/>
                </g>

                <g class="land" transform="translate(1900 1060) scale(.625 .3827)">
                  <path class="farm" d="M70 10H640L1000 20 990 507 1020 830 1050 1010 1130 1130 1040 1150 1030 1280 960 1500H0L20 1300 70 1200 20 1100 110 900 60 760 140 650 90 507z"/>
                  <path class="fields" d="M70 10H420V1500H10L20 1300 70 1200 20 1100 110 900 60 760 140 650 90 507z"/>
                  <path class="town" d="M280 507h70l-10 110-80 20-30 60-60 0 80-150zM140 580l60-30 60 60-20 70-100-30zM530 640l50 10-10 110h230l30 30-160 0 70 60-10 90-80 60-20-160-100 0zM805 830l115 0-10 50-60 50-45-20zM555 830l30 30-10 240-70-30 60-10zM370 910l100-90-50 190-50 160zM440 920l20 10-60 330-20-60zM0 870l60-40-20 110-40 60zM130 1030l50 110-30 20zM60 1300l50-60 30 60-40 70-50 80zM255 1340l45-40 30 30-30 60zM560 1320l80-20 150-90-20 60-100 70-110 10zM580 30l80 0-10 40zM1110 1380l70 10 50-20-60 90-50-10zM380 20l60 10-50 40zM600 280h90l-10 20h-80z"/>
                  <path d="M240 507h50l-60 120-60-20zM340 280h90l-20 20h-80z" fill="#e8dbe6"/>
                  <path class="town" d="M920 730l40-25 110-15 10-35 30 10 30 35 10 50 40-50 25-30 20-35 5 85 30 90 60-80 60 120 10 50-90 10 10 60 50 30-40 110-70 20-20 110-40-60-60-30-10-100-70-60-50-130 30-30-100-40z"/>
                  <path d="M280 850l80 30-10 70-80 90-70-10-40-100 80-30z" fill="#cbc8b4"/>
                  <path class="green" d="M690 560l30 50-50 20-6-20zM700 850l20 90 30 60-60 20-50 70v-140zM310 690l30-10-10 60zM120 507h80l-90 130-30-40zM1310 930l60 10-40 30zM1310 970l90 20-20 20zM1410 1090v140l-90-120h50zM1030 940l20 60-30 20zM900 1200l60 60-20 20zM950 1200l50 90-40-10zM730 600l60-10-30-60zM1020 1190h10v80h-10zM500 1110l20-40-5 60zM0 1100l60-40-20 140-40 60zM60 1070l50-60-20 100zM760 510l10 20-5 30zM1180 507l30 30v30zM880 1430l20 60h-10zM600 730l40-20-10 50zM800 30l200 0-20 40zM60 940l60 20-20 20zM430 620l10 0-5 40z"/>
                  <path d="M840 750l70 0 10 50-80 5zM640 1180l60-40 30 80-10 50-50-20-40 30zM860 940l10 0v20h-10z" fill="#bcdfae"/>
                  <path class="park" d="M0 600l80-60 40 60-60 100-60 0z"/>
                  <path class="road" d="M855 930l-5 90 20 140M1150 980l-90 70-70 60-40 40M990 1130l150 20 140-35M1250 1130v250M150 1325l70 10 115 155M460 1490l100-150M1100 507l70 113 15 80 30 200M500 507l-10 130-50 320-50 310M610 507l-60 130-20 120M1030 860l20 150M0 1000l110 40M190 1190l30 100M290 800l-80 260-20 60M340 810l-90 270M860 1170l-90 80M340 1353h60M1210 920l70-30 130 30M150 750l-40 80-80 20M1000 820v20"/>
                  <path class="river" d="M515 507l-15 73 20 80-40 140-20 70 5 180-20 110-10 140-35 190M0 870l60-100 90-120 60-110M40 1400l60-140M480 20l-50 50"/>
                  <path class="lake" d="M470 870h20l-10 120-20 60-10-60zM440 1100l20 20-15 60zM400 1400l25-20-10 110h-30z"/>
                  <path class="river" d="M610 760l110-20 90 20 50-18 40 8 30 30 80 20 80 45 70 35 50 40 80-5 20 35 100-20M1310 950l40 50 60 10M430 1430l50-55 160-35 100-55 60-65 70-55 80 10 50 125 60 90 50 40 40 15 90-60 70-10 100 65M900 65l50-45M720 540l40 20"/>
                  <path class="border thin slate" d="M0 870l70-110 70-110 60-100 30-43"/>
                  <path class="border" d="M200 690l130 40 50 55 90 30 25 30-5 205-20 150-30 130-15 160"/>
                  <path class="border dashed" d="M610 750l30-90 40-20 35 30 20-60-30-100M670 790l-30 160-15 130-25 160-50 160-10 90M1190 30l10 40 70-30 60 20 80 30"/>
                  <path class="rail" d="M595 510l45 25 90 20 70 55 80 110 55 55 105 30 90 45 40 30M120 20l-40 50M628 20v50"/>
                  <path class="orange" d="M270 640h80l80 50 170 80 160 25 280 50 70 40 110 40 40 75 110 95 40 95M100 65l40-40"/>
                  <path class="red" d="M340 507l-70 113-20 80-20 70-70 180-30 140-130 200M0 610l60-7 70 47 70 40 50 10M265 650l-55 40M565 20l-30 50M465 275l-15 25"/>
                </g>

                <g>
                  <use href="#peak" x="904" y="1273"/><use href="#peak" x="976" y="1323"/><use href="#peak" x="953" y="1583"/><use href="#peak" x="1152" y="1479"/>
                  <use href="#peak" x="1282" y="1363"/><use href="#peak" x="1316" y="1447"/><use href="#peak" x="1514" y="1401"/><use href="#peak" x="1676" y="1329"/>
                  <use href="#peak" x="1703" y="1357"/><use href="#peak" x="1892" y="1371"/><use href="#peak" x="1814" y="1385"/><use href="#peak" x="1954" y="1305"/>
                  <use href="#peak" x="1761" y="1513"/><use href="#peak" x="2098" y="1305"/><use href="#peak" x="2414" y="1293"/><use href="#peak" x="2762" y="1257"/>
                  <use href="#peak" x="2512" y="1407"/><use href="#peak" x="2078" y="1461"/><use href="#peak" x="2168" y="1463"/><use href="#peak" x="2590" y="1550"/>
                  <use href="#peak" x="2190" y="1591"/><use href="#peak" x="2264" y="1611"/><use href="#peak" x="2678" y="1612"/><use href="#peak" x="1983" y="1252"/>
                  <use href="#plane" x="1822" y="1343"/><use href="#plane" x="1512" y="1549"/>
                </g>
                <rect x="1091" y="1354" width="66" height="34" rx="4" fill="#f6d3c8" stroke="#e5a896" stroke-width="2"/>
                <rect x="1618" y="1627" width="64" height="20" rx="3" fill="#f6d3c8" stroke="#e5a896" stroke-width="2"/>
                <g class="labels">
                  <text class="shield" x="1124" y="1379">D001</text>
                  <text class="town-name big" x="1492" y="1356">Toshkent</text>
                  <text class="town-name" x="1123" y="1592">Eshong'uzor</text>
                  <text class="town-name" x="1953" y="1575">Do'stlik</text>
                  <text class="town-name" x="2205" y="1343">Yangibozor</text>
                  <text class="town-name" x="2630" y="1431">Parkent</text>
                  <text class="town-name italic" x="2064" y="1431">Yangi Toshkent</text>
                  <text class="district" transform="translate(700 1446) rotate(88)">Қазақстан</text>
                  <text class="district" x="956" y="1532">Zangiota<tspan x="957" y="1556">Tumani</tspan></text>
                  <text class="district" x="1716" y="1413">Yashnobod<tspan x="1716" y="1437">Tumani</tspan></text>
                  <text class="district" x="2218" y="1557">Yuqorichirchiq<tspan x="2218" y="1580">Tumani</tspan></text>
                  <text class="district" x="1990" y="1618">Yangi Toshkent<tspan x="1990" y="1642">Tumani</tspan></text>
                  <text class="district" x="1564" y="1178">Yunusobod</text>
                  <text class="district city" x="1658" y="1470">Toshkent<tspan x="1657" y="1503">shahri</tspan></text>
                  <text class="district port" x="1512" y="1580">«Toshkent»<tspan x="1512" y="1602">xalqaro</tspan><tspan x="1512" y="1624">aeroporti</tspan></text>
                </g>
              </svg>

              <div class="zone-circle"></div>
              <svg class="marker"><use href="#i-place"/></svg>
              <button class="handle" type="button" aria-label="Resize radius"><svg class="ic28"><use href="#i-resize"/></svg></button>

              <div class="finder">
                <div class="search">
                  <svg class="ic36"><use href="#i-search"/></svg>
                  <input type="text" aria-label="Search an address or place" value="Amir Temur Avenue, Tashkent">
                  <button type="button" aria-label="Search" aria-describedby="tip"><svg class="ic36"><use href="#i-arrow"/></svg></button>
                  <span class="tooltip" role="tooltip" id="tip">Search an address or place</span>
                </div>
                <button class="result" type="button"><svg class="ic36"><use href="#i-pin"/></svg>Amir Temur Avenue, Navbahor mahalla, 2nd Himposelok, Chirchik, Tashkent Region, 111700, Uzbekistan</button>
              </div>

              <div class="credits">
                <svg class="maplogo" viewBox="0 0 48 52" aria-hidden="true">
                  <path d="M0 8q0-4 4-4h26v8L0 46z" fill="#4a4e52"/>
                  <path d="M0 48L28 18v12L8 48z" fill="#f5c56b"/>
                  <path d="M8 48l14-18 16 18z" fill="#4cc3bf"/>
                  <path d="M22 30l6-8 16 22v4h-5z" fill="#eceeee"/>
                  <path d="M4 14l8-7h3l-9 9zM7 17l6-4h-3l-4 4 4 3h3z" fill="#6fc6e0"/>
                  <path d="M36 0c-7 0-12 5-12 12 0 6 9 12 12 25 3-13 12-19 12-25 0-7-5-12-12-12z" fill="#e05c4c"/>
                  <circle cx="36" cy="12" r="4" fill="#933c34"/>
                </svg>
                <button type="button" aria-label="Map attribution"><svg class="ic48"><use href="#i-info"/></svg></button>
              </div>
            </div>

            <div class="zone-row">
              <button class="soft zone" type="button">Zone 1</button>
              <div class="field">
                <label for="lat">Latitude</label>
                <input id="lat" type="text" value="41.3111" aria-describedby="lat-help">
                <small id="lat-help">Latitude: −90 to 90</small>
              </div>
              <div class="field">
                <label for="lon">Longitude</label>
                <input id="lon" type="text" value="69.2797" aria-describedby="lon-help">
                <small id="lon-help">Longitude: −180 to 180</small>
              </div>
              <div class="end">
                <div class="field radius">
                  <label for="rad">Radius, m</label>
                  <input id="rad" type="text" value="1000">
                </div>
                <button class="round trash" type="button" aria-label="Delete zone"><svg class="ic40"><use href="#i-trash"/></svg></button>
              </div>
            </div>
          </div>
        </section>
      </div>
    </main>
  </div>
  <div class="powered">Powered by Media24</div>
</div>
</body>
</html>
```
FILE: styles.css
```css
:root {
  --teal: #57bfb1;
  --teal-dark: #43a797;
  --teal-soft: #e3f6f4;
  --ink: #21272b;
  --muted: #919495;
  --line: #e8e9e9;
}
* { box-sizing: border-box; }
body {
  margin: 0;
  font-family: Inter, "Liberation Sans", sans-serif;
  font-size: 28px;
  color: var(--ink);
  background: #f0f0f0;
}
button, input, select { font: inherit; color: inherit; }
button { margin: 0; padding: 0; border: 0; background: none; cursor: pointer; }
h2, p { margin: 0; }
svg { display: block; flex: none; fill: currentColor; }
.sprite { position: absolute; width: 0; height: 0; }
.ic28 { width: 28px; height: 28px; }
.ic32 { width: 32px; height: 32px; }
.ic36 { width: 36px; height: 36px; }
.ic40 { width: 40px; height: 40px; }
.ic44 { width: 44px; height: 44px; }
.ic48 { width: 48px; height: 48px; }

.app { display: flex; height: 100vh; overflow: hidden; }

/* Sidebar */
.sidebar {
  flex: none;
  width: 112px;
  padding-top: 40px;
  background: #14181b;
}
.logo { display: flex; justify-content: center; }
.logo svg { width: 80px; height: 80px; }
.nav { display: grid; gap: 24px; margin-top: 52px; }
.nav a {
  display: flex;
  align-items: center;
  justify-content: center;
  height: 64px;
  border-radius: 32px;
  color: #a9b8c4;
}
.nav a.active { background: #24403d; color: var(--teal); }

/* Top bar */
.page { flex: 1; min-width: 0; display: flex; flex-direction: column; }
.topbar {
  flex: none;
  display: flex;
  align-items: center;
  height: 96px;
  padding: 0 32px 0 48px;
  background: #fff;
  border-bottom: 2px solid #e2e9e8;
}
.company { display: flex; align-items: center; color: #1a1d1f; font-size: 29px; }
.company span { margin-left: 16px; }
.tools { display: flex; gap: 32px; margin-left: auto; color: #434647; }
.bell { position: relative; }
.badge {
  position: absolute;
  left: 24px;
  top: -8px;
  min-width: 44px;
  height: 32px;
  border-radius: 16px;
  background: #b33a45;
  color: #fff;
  font-size: 23px;
  font-weight: 500;
  line-height: 32px;
  text-align: center;
}
.lang { display: flex; align-items: center; margin: 0 16px; color: #606364; }
.lang select {
  appearance: none;
  padding: 0;
  border: 0;
  background: none;
  color: #15181a;
  font-size: 32px;
}
.avatar {
  display: flex;
  align-items: center;
  justify-content: center;
  width: 56px;
  height: 56px;
  border-radius: 50%;
  background: #97f0f8;
  color: #17443f;
}

/* Content */
.content {
  flex: 1;
  min-height: 0;
  padding: 48px;
  overflow-y: auto;
  scrollbar-width: none;
}
.title-row { display: flex; align-items: center; height: 80px; }
.title {
  flex: 1;
  min-width: 0;
  height: 66px;
  padding: 0 0 8px;
  border: 0;
  border-bottom: 2px solid #dfe1e1;
  background: none;
  font-size: 46px;
  font-weight: 600;
}
.status {
  display: flex;
  align-items: center;
  justify-content: center;
  gap: 12px;
  width: 140px;
  height: 56px;
  margin: 0 24px 0 32px;
  padding-right: 6px;
  border-radius: 28px;
  background: #e5e6e6;
  color: var(--muted);
  font-size: 25px;
  font-weight: 600;
}
.save {
  display: flex;
  align-items: center;
  justify-content: center;
  gap: 16px;
  width: 192px;
  height: 80px;
  margin-right: 24px;
  padding-bottom: 2px;
  border-radius: 8px;
  background: var(--teal);
  color: #fff;
  font-size: 25px;
  font-weight: 600;
}
.round {
  flex: none;
  display: flex;
  align-items: center;
  justify-content: center;
  width: 80px;
  height: 80px;
  border: 2px solid #ebecec;
  border-radius: 50%;
  background: #fff;
  color: #868a8b;
}

.switch { display: flex; align-items: center; gap: 24px; width: fit-content; font-size: 27px; }
.switch.centered { margin: 32px auto 24px; }
.switch input {
  appearance: none;
  flex: none;
  display: flex;
  width: 72px;
  height: 40px;
  margin: 0;
  padding: 4px;
  border-radius: 20px;
  background: #e0e1e2;
}
.switch input::before {
  content: "";
  width: 32px;
  height: 32px;
  border-radius: 50%;
  background: #fff;
}
.switch input:checked { justify-content: flex-end; background: var(--teal); }

.steps { display: grid; gap: 24px; }
.card {
  border: 2px solid var(--line);
  border-radius: 10px;
  background: #fff;
}
.step-head {
  display: flex;
  align-items: center;
  gap: 24px;
  height: 104px;
  padding: 0 32px;
}
.step-head h2 { font-size: 31px; font-weight: 600; }
.step-head p { margin-left: 40px; color: var(--muted); font-size: 25px; }
.step-head.current { border-radius: 8px 8px 0 0; background: var(--teal); color: #fff; }
.done { color: #198458; }
.number {
  display: flex;
  align-items: center;
  justify-content: center;
  width: 44px;
  height: 44px;
  border-radius: 50%;
  background: #fff;
  color: var(--teal-dark);
  font-size: 25px;
  font-weight: 700;
}
.step-body { padding: 32px 48px 64px; }
.soft {
  display: flex;
  align-items: center;
  height: 60px;
  padding: 0 24px 2px 26px;
  border-radius: 8px;
  background: var(--teal-soft);
  color: var(--teal-dark);
  font-size: 26px;
  font-weight: 600;
}
.params { gap: 12px; }
.devices { margin-top: 32px; }
hr { margin: 48px 0 32px; border: 0; border-top: 2px solid var(--line); }
.hint { margin: 18px 0 24px; color: var(--muted); font-size: 25px; line-height: 32px; }

/* Map */
.map { position: relative; height: 560px; border-radius: 16px; }
.tiles { width: 100%; height: 100%; border-radius: 16px; overflow: hidden; }
.land path { vector-effect: non-scaling-stroke; stroke-linejoin: round; }
.land .farm { fill: #eef0d6; }
.land .fields { fill: url(#fields); }
.land .town { fill: #cfcfcf; }
.land .streets { fill: url(#streets); opacity: .6; }
.land .green { fill: #aee0a5; }
.land .orchard { fill: #cdeab0; }
.land .park { fill: #c5f3dc; }
.land .lake { fill: #aad3df; }
.land .road { fill: none; stroke: #bcbcbe; stroke-width: 2; }
.land .river { fill: none; stroke: #a3d5e3; stroke-width: 4; }
.land .river.thin, .land .ditch { fill: none; stroke: #86c9da; stroke-width: 2; }
.land .border { fill: none; stroke: #a590ab; stroke-width: 7; }
.land .border.thin { stroke-width: 4; }
.land .border.slate { stroke: #8f90ae; }
.land .border.dashed { stroke-width: 3; stroke-dasharray: 12 4; }
.land .rail { fill: none; stroke: #8b8b8d; stroke-width: 3; }
.land .orange { fill: none; stroke: #f8c57d; stroke-width: 5; }
.land .orange.brown { stroke: #dba377; stroke-width: 4; }
.land .red { fill: none; stroke: #f29378; stroke-width: 5; }
.labels {
  font-family: "Noto Sans", sans-serif;
  font-size: 20px;
  text-anchor: middle;
  paint-order: stroke;
  stroke: #ffffffa0;
  stroke-width: 3px;
}
.shield { fill: #6b4a42; font-size: 20px; font-weight: 500; stroke: none; }
.town-name { fill: #45474a; font-size: 22px; }
.town-name.big { font-size: 30px; }
.town-name.italic { font-size: 20px; font-style: italic; }
.district { fill: #9a7f9f; font-style: italic; }
.district.city { fill: #806787; font-size: 25px; }
.district.port { fill: #7c65a6; }

.zone-circle {
  position: absolute;
  left: 50%;
  top: 50%;
  width: 72px;
  height: 72px;
  margin: -36px 0 0 -36px;
  border: 4px solid var(--teal);
  border-radius: 50%;
  background: #57bfb130;
}
.marker {
  position: absolute;
  left: 50%;
  bottom: 50%;
  width: 64px;
  height: 64px;
  margin: 0 0 4px -32px;
  color: var(--teal);
}
.handle {
  position: absolute;
  left: 50%;
  top: 50%;
  display: flex;
  align-items: center;
  justify-content: center;
  width: 56px;
  height: 56px;
  margin: -28px 0 0 7px;
  border: 6px solid var(--teal);
  border-radius: 50%;
  background: #fff;
  color: var(--teal);
}
.finder { position: absolute; inset: 16px 16px auto; display: grid; gap: 8px; }
.search, .result {
  display: flex;
  align-items: center;
  height: 80px;
  border: 2px solid #dedfdf;
  border-radius: 10px;
  background: #fff;
  color: #17191a;
}
.search { position: relative; padding-left: 14px; }
.search > svg { color: #8d9091; }
.search input {
  flex: 1;
  min-width: 0;
  margin-left: 40px;
  padding: 0;
  border: 0;
  outline: 0;
  background: none;
  font-size: 34px;
}
.search button {
  display: flex;
  align-items: center;
  justify-content: center;
  width: 78px;
  height: 76px;
  border-radius: 50%;
  background: #f2f2f2;
  color: #3c3f40;
}
.result { gap: 36px; padding: 0 30px 2px; text-align: left; }
.result svg { color: #3c3f40; }
.tooltip {
  position: absolute;
  right: -96px;
  top: 86px;
  z-index: 1;
  padding: 0 16px;
  border-radius: 8px;
  background: #616161e8;
  color: #fff;
  font-size: 25px;
  line-height: 50px;
  white-space: nowrap;
}
.credits {
  position: absolute;
  right: 24px;
  bottom: 22px;
  display: flex;
  align-items: center;
  gap: 22px;
  opacity: .7;
}
.maplogo { width: 48px; height: 52px; }

/* Zone row */
.zone-row { display: flex; align-items: center; gap: 16px; margin-top: 32px; padding: 0 8px; }
.zone { flex: none; width: 132px; justify-content: center; padding: 0 0 2px; }
.field { position: relative; flex: 1; min-width: 0; }
.field label {
  position: absolute;
  left: 24px;
  top: -12px;
  padding: 0 9px;
  background: #fff;
  color: var(--muted);
  font-size: 19px;
  line-height: 24px;
}
.field input {
  display: block;
  width: 100%;
  height: 72px;
  padding: 0 30px 4px;
  border: 2px solid #434647;
  border-radius: 8px;
  background: none;
  font-size: 28px;
}
.field small {
  display: block;
  height: 38px;
  padding: 6px 32px 0;
  color: #b6b9ba;
  font-size: 23px;
  line-height: 32px;
}
.end { display: flex; align-items: center; gap: 8px; }
.radius { flex: none; width: 220px; }
.powered {
  position: fixed;
  right: 32px;
  bottom: 12px;
  color: #b6b9ba;
  font-size: 23px;
  line-height: 32px;
}
```
